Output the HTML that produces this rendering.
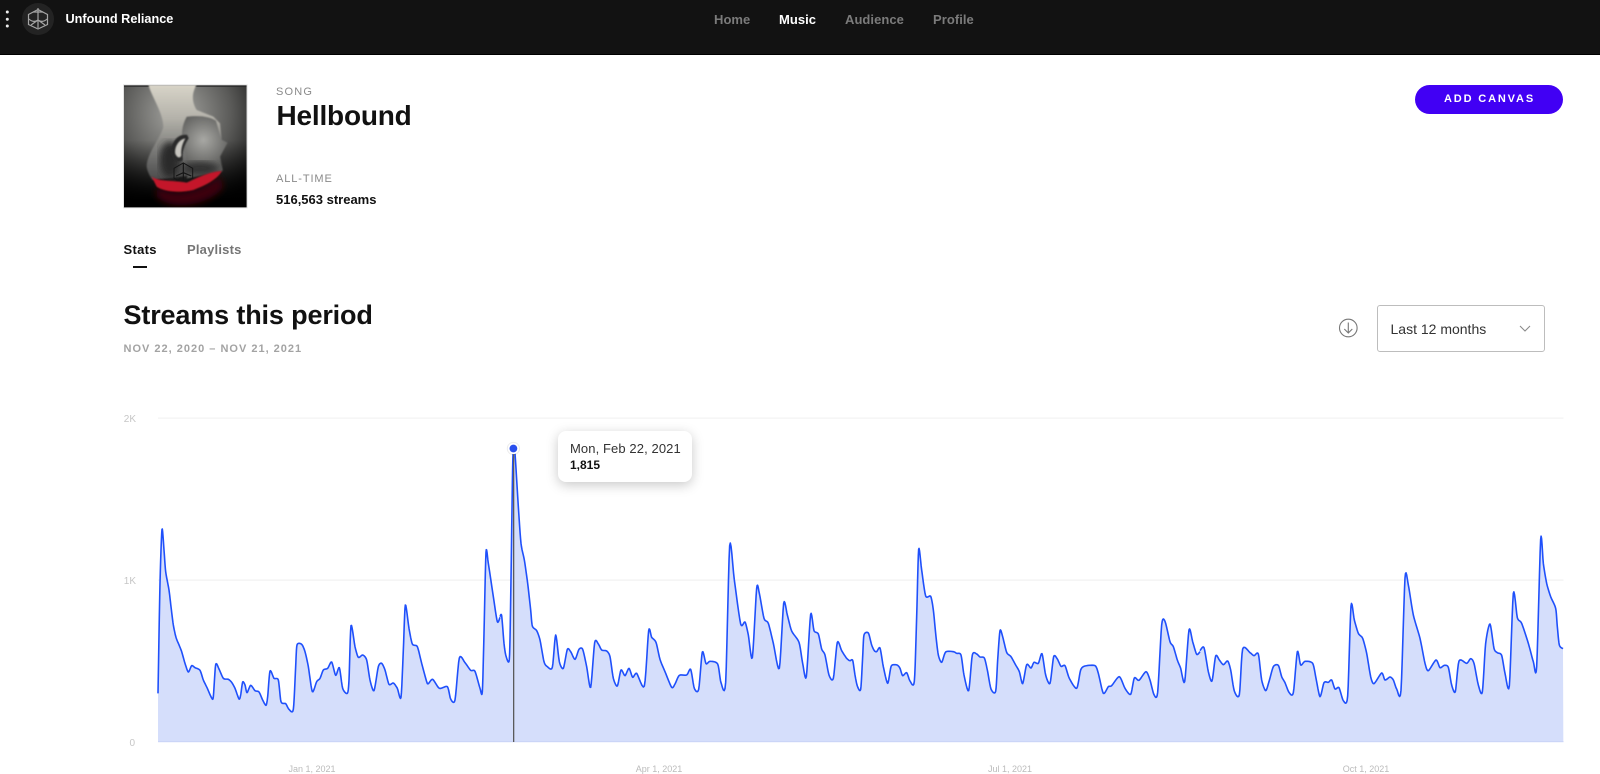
<!DOCTYPE html>
<html lang="en">
<head>
<meta charset="utf-8">
<title>Hellbound</title>
<style>
html,body{margin:0;padding:0;background:#fff;}
body{width:1600px;height:773px;position:relative;overflow:hidden;font-family:"Liberation Sans",sans-serif;}
.t{position:absolute;white-space:nowrap;line-height:1;}
.hdr{position:absolute;left:0;top:0;width:1600px;height:54px;background:#121212;border-bottom:1px solid #000;}
.nav{font-size:13px;font-weight:bold;color:#7b7b7b;top:13px;letter-spacing:.05px;}
.lab{font-size:10px;color:#c6c6c6;}
.dt{font-size:9px;color:#bbb;top:765px;transform:translateX(-50%);}
.btn{position:absolute;left:1415px;top:84.5px;width:148px;height:29px;border-radius:15px;background:#4100f4;}
.dd{position:absolute;left:1377px;top:305px;width:166px;height:45px;border:1px solid #bdbdbd;border-radius:3px;}
.tip{position:absolute;left:558px;top:431px;width:134px;height:51px;background:#fff;border-radius:8px;box-shadow:0 3px 12px rgba(0,0,0,.22);}
svg{position:absolute;}
</style>
</head>
<body>
<div class="hdr"></div>
<svg style="left:0;top:0" width="60" height="40" viewBox="0 0 60 40">
<circle cx="7.3" cy="12" r="1.5" fill="#eee"/><circle cx="7.3" cy="19.3" r="1.5" fill="#eee"/><circle cx="7.3" cy="26" r="1.5" fill="#eee"/>
<circle cx="38" cy="19" r="16" fill="#232323"/>
<g fill="none" stroke="#a5a5a5" stroke-width="1.2">
<path d="M38 9.5L47.5 14.5V24.5L38 29L28.5 24.5V14.5Z"/>
<path d="M38 8V21M33 12H43M29 19C32 22 35 22 38 20C41 22 44 22 47 19M31 25L38 20L45 25M38 21V28"/>
</g>
</svg>
<div class="t" style="left:65.5px;top:12.5px;font-size:12.7px;font-weight:bold;color:#fff">Unfound Reliance</div>
<div class="t nav" style="left:714px">Home</div>
<div class="t nav" style="left:779px;color:#fff">Music</div>
<div class="t nav" style="left:845px">Audience</div>
<div class="t nav" style="left:933px">Profile</div>

<svg style="left:0;top:0" width="400" height="270" viewBox="0 0 1200 810">
<defs>
<radialGradient id="bg" gradientUnits="userSpaceOnUse" cx="530" cy="340" r="300"><stop offset="0" stop-color="#a6a6a2"/><stop offset=".55" stop-color="#5a5a58"/><stop offset="1" stop-color="#0c0c0c"/></radialGradient>
<linearGradient id="skin" gradientUnits="userSpaceOnUse" x1="0" y1="254" x2="0" y2="540"><stop offset="0" stop-color="#d8d4c8"/><stop offset=".35" stop-color="#b4b2aa"/><stop offset=".7" stop-color="#787876"/><stop offset="1" stop-color="#4a4a4a"/></linearGradient>
<linearGradient id="low" gradientUnits="userSpaceOnUse" x1="0" y1="420" x2="0" y2="600"><stop offset="0" stop-color="#000" stop-opacity="0"/><stop offset="1" stop-color="#000"/></linearGradient>
<radialGradient id="hd" gradientUnits="userSpaceOnUse" cx="610" cy="420" r="90"><stop offset="0" stop-color="#a8a8a4"/><stop offset="1" stop-color="#5c5c5a"/></radialGradient>
<filter id="b1"><feGaussianBlur stdDeviation="2.5"/></filter>
<filter id="b2"><feGaussianBlur stdDeviation="10"/></filter>
<clipPath id="art"><rect x="372" y="256" width="368" height="366"/></clipPath>
</defs>
<rect x="369" y="253" width="374" height="372" fill="#e4e4e4"/>
<g clip-path="url(#art)">
<rect x="372" y="256" width="368" height="366" fill="url(#bg)"/>
<rect x="372" y="420" width="368" height="202" fill="url(#low)"/>
<rect x="372" y="254" width="368" height="6" fill="#222"/>
<g filter="url(#b1)">
<path d="M445 254C455 290 490 340 490 380C485 410 440 460 440 500C442 515 450 530 458 540L665 515L668 510L660 470L682 428L665 420L660 370L640 350L590 330C578 310 572 285 590 254Z" fill="url(#skin)"/>
<path d="M560 350C600 345 630 350 648 362L665 420L682 428L660 470L668 512L560 535C580 480 520 420 560 350Z" fill="url(#hd)"/>
</g>
<ellipse cx="510" cy="480" rx="32" ry="55" fill="#2c2c2c" filter="url(#b2)"/>
<ellipse cx="600" cy="505" rx="55" ry="20" fill="#333" filter="url(#b2)"/>
<path d="M562 405C535 400 512 425 513 460C518 480 535 490 548 480C545 460 552 435 566 415Z" fill="#2a2a2a" filter="url(#b1)"/>
<path d="M556 415C538 417 522 440 526 462C532 474 540 476 544 466C542 445 548 430 556 415Z" fill="#c8c6c0" filter="url(#b1)"/>
<path d="M522 505L550 489L578 505V535L550 548L522 535Z" fill="none" stroke="#151515" stroke-width="3"/>
<path d="M550 489V545M528 528L550 518L574 528" fill="none" stroke="#151515" stroke-width="3.5"/>
<path d="M470 560C520 590 590 580 660 530L670 560C640 610 520 640 470 590Z" fill="#3c0308" filter="url(#b2)"/>
<path d="M455 530C475 545 510 540 560 548C590 535 625 515 665 513C655 535 620 555 580 570C540 580 490 575 470 560Z" fill="#c4152a" filter="url(#b1)"/>
</g>
</svg>

<div class="t" style="left:276px;top:87px;font-size:11px;color:#8a8a8a;letter-spacing:1.2px">SONG</div>
<div class="t" style="left:276.5px;top:101.5px;font-size:28px;font-weight:bold;color:#111;letter-spacing:-.2px">Hellbound</div>
<div class="t" style="left:276px;top:174px;font-size:11px;color:#8a8a8a;letter-spacing:.9px">ALL-TIME</div>
<div class="t" style="left:276px;top:192.5px;font-size:13px;font-weight:bold;color:#111">516,563 streams</div>

<div class="t" style="left:123.5px;top:242.5px;font-size:13px;font-weight:bold;color:#111;letter-spacing:.3px">Stats</div>
<div class="t" style="left:187px;top:242.5px;font-size:13px;font-weight:bold;color:#767676;letter-spacing:.2px">Playlists</div>
<div style="position:absolute;left:133px;top:266px;width:14px;height:1.5px;background:#111"></div>

<div class="btn"></div>
<div class="t" style="left:1444px;top:94px;font-size:11px;font-weight:bold;color:#fff;letter-spacing:1.85px">ADD CANVAS</div>

<div class="t" style="left:123.5px;top:301.5px;font-size:27px;font-weight:bold;color:#111;letter-spacing:-.15px">Streams this period</div>
<div class="t" style="left:123.5px;top:343.5px;font-size:11px;font-weight:bold;color:#a3a3a3;letter-spacing:1px">NOV 22, 2020 – NOV 21, 2021</div>

<svg style="left:1336px;top:316px" width="24" height="24" viewBox="0 0 24 24" fill="none" stroke="#777" stroke-width="1.1">
<circle cx="12.3" cy="12" r="8.8"/><path d="M12.3 6.5V17M8.3 13L12.3 17L16.3 13"/>
</svg>
<div class="dd"></div>
<div class="t" style="left:1390.5px;top:322px;font-size:14px;color:#333">Last 12 months</div>
<svg style="left:1518px;top:324px" width="14" height="9" viewBox="0 0 14 9" fill="none" stroke="#8a8a8a" stroke-width="1.1"><path d="M2 2L7 7L12 2"/></svg>

<svg style="left:0;top:0" width="1600" height="773" viewBox="0 0 1600 773">
<rect x="158" y="417.5" width="1405.5" height="1.2" fill="#f3f3f3"/>
<rect x="158" y="579.5" width="1405.5" height="1.2" fill="#f1f1f1"/>
<g fill="#d5defb" stroke="none">
<polygon class="sm" transform="translate(150,500) scale(.33333)" points="24,726 24,580 30,250 36,88 42,150 47,215 57,270 63,320 70,375 78,412 88,437 95,455 105,490 115,516 125,497 135,503 150,511 160,540 172,565 185,594 190,590 197,494 207,507 220,535 235,538 245,547 255,565 267,597 272,585 278,546 285,555 291,578 302,556 315,572 327,576 338,600 348,616 353,590 360,513 372,535 385,540 393,605 407,611 417,628 430,628 437,500 441,435 455,433 465,455 475,500 487,575 500,545 510,535 520,510 533,505 545,486 557,526 568,503 578,565 592,580 597,540 603,377 615,440 625,472 638,465 650,480 660,540 672,572 685,500 695,490 705,510 717,553 730,549 742,565 753,592 760,450 766,315 777,385 787,432 802,440 815,490 830,545 835,551 848,538 868,565 892,560 902,597 915,600 928,474 945,488 962,511 975,514 990,565 997,575 1002,400 1008,157 1015,190 1030,290 1042,365 1050,355 1050,726"/>
<polygon class="sm" transform="translate(500,500) scale(.33333)" points="0,726 0,350 5,347 12,430 18,468 28,478 32,300 38,-100 41,-155 45,-140 55,20 63,130 73,180 83,250 92,330 97,378 110,392 120,420 132,485 142,500 157,502 167,405 178,485 190,505 202,448 212,455 225,478 237,448 248,448 260,500 272,562 284,428 295,432 305,450 320,453 330,470 340,535 352,558 363,510 375,527 387,505 398,532 410,520 433,558 446,392 455,412 468,427 480,478 495,515 515,562 525,552 538,526 560,525 572,508 583,565 596,568 607,456 618,491 630,484 653,492 663,548 677,547 689,137 703,240 722,372 735,366 745,405 757,473 770,265 778,280 792,355 805,370 820,430 838,505 851,310 862,345 875,393 897,427 908,490 919,530 932,343 942,392 955,402 965,447 975,465 987,525 1000,535 1012,427 1025,452 1040,475 1050,483 1050,726"/>
<polygon class="sm" transform="translate(850,500) scale(.33333)" points="0,726 0,483 8,481 15,525 22,558 32,568 38,470 42,405 55,399 65,435 73,452 80,455 90,444 100,500 113,550 123,500 133,494 143,496 150,505 158,527 170,518 180,543 193,544 200,350 206,148 215,210 227,288 242,289 250,330 258,410 265,465 275,487 287,456 310,455 320,460 333,465 342,525 356,572 367,465 380,462 390,471 403,474 412,510 423,567 437,574 443,480 450,392 458,410 470,457 483,470 497,495 508,515 518,551 530,494 543,504 552,487 565,490 576,461 587,525 600,550 611,470 622,477 633,499 645,497 658,535 680,565 692,510 705,498 735,497 745,520 760,580 775,560 785,557 808,530 825,565 842,583 853,534 867,541 888,515 900,540 912,584 923,577 935,375 945,364 960,425 970,440 982,480 992,505 1004,545 1017,390 1028,425 1040,463 1050,455 1050,726"/>
<polygon class="sm" transform="translate(1200,500) scale(.33333)" points="0,726 0,452 12,443 25,515 36,543 47,468 58,480 70,494 83,483 92,510 103,573 118,584 128,447 150,458 162,467 175,462 185,540 197,572 207,545 220,500 235,496 245,530 255,548 267,577 280,578 292,455 302,495 315,484 338,490 348,535 360,590 372,548 385,547 395,540 405,567 417,563 430,602 443,588 453,318 463,360 475,400 488,415 500,460 512,530 522,551 545,519 555,540 570,531 580,540 590,567 603,571 615,234 625,255 640,345 660,415 675,490 685,512 708,480 720,503 733,496 745,502 755,555 766,575 777,483 800,490 812,476 822,490 835,555 847,576 857,430 870,372 882,445 892,458 905,466 915,520 928,558 940,280 952,353 965,370 985,430 1000,485 1010,500 1022,118 1030,190 1040,250 1052,290 1067,325 1072,380 1078,435 1089,446 1090,726"/>
</g>
<rect x="158" y="741" width="1405.5" height="1.2" fill="#cbd5f7"/>
<g fill="none" stroke="#1f50fb" stroke-width="4.8" stroke-linejoin="round" stroke-linecap="butt">
<polyline class="sm" transform="translate(150,500) scale(.33333)" points="24,580 30,250 36,88 42,150 47,215 57,270 63,320 70,375 78,412 88,437 95,455 105,490 115,516 125,497 135,503 150,511 160,540 172,565 185,594 190,590 197,494 207,507 220,535 235,538 245,547 255,565 267,597 272,585 278,546 285,555 291,578 302,556 315,572 327,576 338,600 348,616 353,590 360,513 372,535 385,540 393,605 407,611 417,628 430,628 437,500 441,435 455,433 465,455 475,500 487,575 500,545 510,535 520,510 533,505 545,486 557,526 568,503 578,565 592,580 597,540 603,377 615,440 625,472 638,465 650,480 660,540 672,572 685,500 695,490 705,510 717,553 730,549 742,565 753,592 760,450 766,315 777,385 787,432 802,440 815,490 830,545 835,551 848,538 868,565 892,560 902,597 915,600 928,474 945,488 962,511 975,514 990,565 997,575 1002,400 1008,157 1015,190 1030,290 1042,365 1050,352"/>
<polyline class="sm" transform="translate(500,500) scale(.33333)" points="0,350 5,347 12,430 18,468 28,478 32,300 38,-100 41,-155 45,-140 55,20 63,130 73,180 83,250 92,330 97,378 110,392 120,420 132,485 142,500 157,502 167,405 178,485 190,505 202,448 212,455 225,478 237,448 248,448 260,500 272,562 284,428 295,432 305,450 320,453 330,470 340,535 352,558 363,510 375,527 387,505 398,532 410,520 433,558 446,392 455,412 468,427 480,478 495,515 515,562 525,552 538,526 560,525 572,508 583,565 596,568 607,456 618,491 630,484 653,492 663,548 677,547 689,137 703,240 722,372 735,366 745,405 757,473 770,265 778,280 792,355 805,370 820,430 838,505 851,310 862,345 875,393 897,427 908,490 919,530 932,343 942,392 955,402 965,447 975,465 987,525 1000,535 1012,427 1025,452 1040,475 1050,483"/>
<polyline class="sm" transform="translate(850,500) scale(.33333)" points="0,483 8,481 15,525 22,558 32,568 38,470 42,405 55,399 65,435 73,452 80,455 90,444 100,500 113,550 123,500 133,494 143,496 150,505 158,527 170,518 180,543 193,544 200,350 206,148 215,210 227,288 242,289 250,330 258,410 265,465 275,487 287,456 310,455 320,460 333,465 342,525 356,572 367,465 380,462 390,471 403,474 412,510 423,567 437,574 443,480 450,392 458,410 470,457 483,470 497,495 508,515 518,551 530,494 543,504 552,487 565,490 576,461 587,525 600,550 611,470 622,477 633,499 645,497 658,535 680,565 692,510 705,498 735,497 745,520 760,580 775,560 785,557 808,530 825,565 842,583 853,534 867,541 888,515 900,540 912,584 923,577 935,375 945,364 960,425 970,440 982,480 992,505 1004,545 1017,390 1028,425 1040,463 1050,455"/>
<polyline class="sm" transform="translate(1200,500) scale(.33333)" points="0,452 12,443 25,515 36,543 47,468 58,480 70,494 83,483 92,510 103,573 118,584 128,447 150,458 162,467 175,462 185,540 197,572 207,545 220,500 235,496 245,530 255,548 267,577 280,578 292,455 302,495 315,484 338,490 348,535 360,590 372,548 385,547 395,540 405,567 417,563 430,602 443,588 453,318 463,360 475,400 488,415 500,460 512,530 522,551 545,519 555,540 570,531 580,540 590,567 603,571 615,234 625,255 640,345 660,415 675,490 685,512 708,480 720,503 733,496 745,502 755,555 766,575 777,483 800,490 812,476 822,490 835,555 847,576 857,430 870,372 882,445 892,458 905,466 915,520 928,558 940,280 952,353 965,370 985,430 1000,485 1010,500 1022,118 1030,190 1040,250 1052,290 1067,325 1072,380 1078,435 1089,446"/>
</g>
<rect x="513" y="450" width="1.3" height="292" fill="#5a5a5a"/>
<circle cx="513.4" cy="448.5" r="6.6" fill="#000" opacity=".08"/>
<circle cx="513.4" cy="448.5" r="5.6" fill="#fff"/>
<circle cx="513.4" cy="448.5" r="3.9" fill="#2a50ee"/>
</svg>

<div class="t lab" style="right:1464px;top:415px">2K</div>
<div class="t lab" style="right:1464px;top:577px">1K</div>
<div class="t lab" style="right:1465px;top:738.5px">0</div>
<div class="t dt" style="left:312px">Jan 1, 2021</div>
<div class="t dt" style="left:659px">Apr 1, 2021</div>
<div class="t dt" style="left:1010px">Jul 1, 2021</div>
<div class="t dt" style="left:1366px">Oct 1, 2021</div>

<div class="tip"></div>
<div class="t" style="left:570px;top:441.5px;font-size:13px;color:#333;letter-spacing:.1px">Mon, Feb 22, 2021</div>
<div class="t" style="left:570px;top:459px;font-size:12px;font-weight:bold;color:#111">1,815</div>

<script>
document.querySelectorAll('.sm').forEach(function(el){
  var p=el.getAttribute('points').trim().split(/\s+/).map(function(s){return s.split(',').map(Number);});
  var poly=el.tagName.toLowerCase()==='polygon';
  var c=poly?p.slice(1,p.length-1):p, out=[], s=.38, n=6;
  for(var i=0;i<c.length-1;i++){
    var a=c[i],b=c[i+1],z=c[Math.max(i-1,0)],d=c[Math.min(i+2,c.length-1)];
    var m0=[s*(b[0]-z[0]),s*(b[1]-z[1])],m1=[s*(d[0]-a[0]),s*(d[1]-a[1])];
    for(var k=0;k<n;k++){
      var t=k/n,t2=t*t,t3=t2*t,h1=2*t3-3*t2+1,h2=t3-2*t2+t,h3=-2*t3+3*t2,h4=t3-t2;
      out.push((h1*a[0]+h2*m0[0]+h3*b[0]+h4*m1[0]).toFixed(1)+','+(h1*a[1]+h2*m0[1]+h3*b[1]+h4*m1[1]).toFixed(1));
    }
  }
  out.push(c[c.length-1].join(','));
  if(poly){out.unshift(p[0].join(','));out.push(p[p.length-1].join(','));}
  el.setAttribute('points',out.join(' '));
});
</script>
</body>
</html>
